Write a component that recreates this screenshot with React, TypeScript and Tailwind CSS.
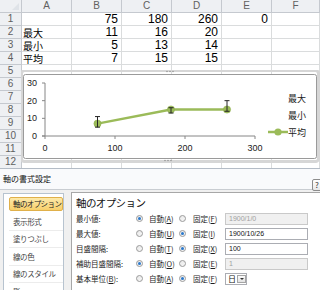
import React from "react";

const cols = ["A", "B", "C", "D", "E", "F"];
const data: string[][] = [
  ["", "75", "180", "260", "0", ""],
  ["最大", "11", "16", "20", "", ""],
  ["最小", "5", "13", "14", "", ""],
  ["平均", "7", "15", "15", "", ""],
];

function Sheet() {
  const rows = Array.from({ length: 12 }, (_, i) => i + 1);
  return (
    <div className="grid grid-cols-[22px_50px_50px_50px_50px_50px_48px] auto-rows-[13px]">
      <div className="relative bg-[#eef0f3] border-r border-b border-[#c5c9cf]">
        <div className="absolute right-[2px] bottom-[2px] w-0 h-0 border-l-[7px] border-l-transparent border-b-[7px] border-b-[#dfe3e8]" />
      </div>
      {cols.map((c) => (
        <div
          key={c}
          className="bg-[#eef0f3] border-r border-b border-[#c5c9cf] flex items-center justify-center text-[10px] leading-none text-[#606060] font-['Liberation_Sans_Narrow','Liberation_Sans',sans-serif]"
        >
          {c}
        </div>
      ))}
      {rows.map((r) => {
        const row = data[r - 1] || ["", "", "", "", "", ""];
        return (
          <React.Fragment key={r}>
            <div className="bg-[#eef0f3] border-r border-b border-[#c5c9cf] flex items-center justify-center text-[10px] leading-none text-[#606060] font-['Liberation_Sans_Narrow','Liberation_Sans',sans-serif]">
              {r}
            </div>
            {row.map((v, i) => {
              const isNum = /^[0-9]+$/.test(v);
              return (
                <div
                  key={i}
                  className={
                    isNum
                      ? "border-r border-b border-[#dadcdd] flex items-center justify-end pr-[3px] text-[12px] leading-none text-black font-['Liberation_Sans_Narrow','Liberation_Sans',sans-serif]"
                      : "border-r border-b border-[#dadcdd] flex items-center justify-start pl-[1px] text-[10px] leading-[11px] text-black font-['Noto_Sans_CJK_JP',sans-serif]"
                  }
                >
                  {v}
                </div>
              );
            })}
          </React.Fragment>
        );
      })}
    </div>
  );
}

function Chart() {
  const g = "#9bbb59";
  const ax = "#868686";
  const x = (v: number) => 45 + 0.7 * v;
  const y = (v: number) => 136 - (53 / 30) * v;
  const pts = [
    { v: 75, avg: 7, min: 5, max: 11 },
    { v: 180, avg: 15, min: 13, max: 16 },
    { v: 260, avg: 15, min: 14, max: 20 },
  ];
  return (
    <div className="absolute left-[21px] top-[70px] w-[299px] h-[93px]">
      <svg width="299" height="93" viewBox="21 70 299 93" className="block">
        <rect x="21.5" y="70.5" width="297" height="91" rx="3" fill="none" stroke="#d6d6d6" strokeWidth="3" />
        <rect x="23.5" y="74.5" width="293" height="84" rx="2" fill="#ffffff" stroke="#9a9a9a" strokeWidth="1" />
        {[0, 1, 2].map((i) => (
          <circle key={"t" + i} cx={167 + i * 3} cy={71.5} r={0.7} fill="#8a8a8a" />
        ))}
        {[0, 1, 2].map((i) => (
          <circle key={"b" + i} cx={165 + i * 3} cy={160.5} r={0.7} fill="#8a8a8a" />
        ))}
        <line x1="45" y1="83" x2="45" y2="136" stroke={ax} strokeWidth="1" />
        {[0, 10, 20, 30].map((v) => (
          <g key={v}>
            <line x1="42" y1={y(v)} x2="45" y2={y(v)} stroke={ax} strokeWidth="1" />
            <text
              x="37"
              y={y(v) + 3}
              textAnchor="end"
              fontSize="9"
              fill="#222"
              fontFamily="'Liberation Sans', sans-serif"
            >
              {v}
            </text>
          </g>
        ))}
        <line x1="42" y1="136" x2="255" y2="136" stroke={ax} strokeWidth="1" />
        {[0, 100, 200, 300].map((v) => (
          <g key={v}>
            <line x1={x(v)} y1="136" x2={x(v)} y2="139" stroke={ax} strokeWidth="1" />
            <text
              x={x(v)}
              y="151"
              textAnchor="middle"
              fontSize="9"
              fill="#222"
              fontFamily="'Liberation Sans', sans-serif"
            >
              {v}
            </text>
          </g>
        ))}
        <polyline
          points={pts.map((p) => `${x(p.v)},${y(p.avg)}`).join(" ")}
          fill="none"
          stroke={g}
          strokeWidth="2.5"
          strokeLinejoin="round"
        />
        {pts.map((p, i) => (
          <circle key={"m" + i} cx={x(p.v)} cy={y(p.avg)} r="3.6" fill={g} stroke="#8fb04d" strokeWidth="0.6" />
        ))}
        {pts.map((p, i) => (
          <g key={"e" + i} stroke="#262626" strokeWidth="1">
            <line x1={x(p.v)} y1={y(p.max)} x2={x(p.v)} y2={y(p.min)} />
            <line x1={x(p.v) - 2.5} y1={y(p.max)} x2={x(p.v) + 2.5} y2={y(p.max)} />
            <line x1={x(p.v) - 2.5} y1={y(p.min)} x2={x(p.v) + 2.5} y2={y(p.min)} />
          </g>
        ))}
        {[
          { t: "最大", yy: 98 },
          { t: "最小", yy: 115 },
          { t: "平均", yy: 132 },
        ].map((l) => (
          <text
            key={l.t}
            x="288"
            y={l.yy + 3.5}
            fontSize="9"
            fill="#222"
            fontFamily="'Noto Sans CJK JP', sans-serif"
          >
            {l.t}
          </text>
        ))}
        <line x1="268" y1="132" x2="288" y2="132" stroke={g} strokeWidth="2.5" />
        <circle cx="278" cy="132" r="3.6" fill={g} />
      </svg>
    </div>
  );
}

function Radio({ on }: { on: boolean }) {
  return (
    <div className="w-[7px] h-[7px] rounded-full border border-[#9a9a9a] bg-gradient-to-br from-[#e8e8e8] to-[#f8f8f8] flex items-center justify-center shrink-0">
      {on && <div className="w-[3px] h-[3px] rounded-full bg-[#2a78cc]" />}
    </div>
  );
}

function U({ c }: { c: string }) {
  return <span className="underline underline-offset-[1px]">{c}</span>;
}

type RowDef = {
  label: React.ReactNode;
  a: string;
  f: string;
  autoOn: boolean;
  value: string;
  kind: "input" | "select";
  disabled?: boolean;
};

function OptRow({ r }: { r: RowDef }) {
  return (
    <div className="h-[15px] flex items-center">
      <div className="w-[60px] shrink-0 text-[7.5px] leading-none text-[#1e1e1e] whitespace-nowrap">{r.label}</div>
      <Radio on={r.autoOn} />
      <div className="w-[36px] pl-[6px] shrink-0 text-[7.5px] leading-none text-[#1e1e1e] whitespace-nowrap">
        自動(<U c={r.a} />)
      </div>
      <Radio on={!r.autoOn} />
      <div className="w-[39px] pl-[7px] shrink-0 text-[7.5px] leading-none text-[#1e1e1e] whitespace-nowrap">
        固定(<U c={r.f} />)
      </div>
      {r.kind === "input" ? (
        <div
          className={
            r.disabled
              ? "w-[83px] h-[12px] border border-[#c9c9c9] bg-[#f0f0f0] flex items-center pl-[3px] text-[7px] text-[#a0a0a0] leading-none font-['Liberation_Sans',sans-serif]"
              : "w-[83px] h-[12px] border border-[#abadb3] bg-white flex items-center pl-[3px] text-[7px] text-[#111] leading-none font-['Liberation_Sans',sans-serif]"
          }
        >
          {r.value}
        </div>
      ) : (
        <div className="w-[22px] h-[12px] border border-[#abadb3] bg-white flex items-center pl-[2px] gap-[1px]">
          <span className="text-[8px] leading-none text-[#111] w-[8px]">{r.value}</span>
          <div className="w-[9px] h-[8px] border border-[#a5a5a5] bg-gradient-to-b from-[#fbfbfb] to-[#e2e2e2] flex items-center justify-center">
            <div className="w-0 h-0 border-l-[2px] border-r-[2px] border-t-[2px] border-l-transparent border-r-transparent border-t-[#333]" />
          </div>
        </div>
      )}
    </div>
  );
}

function Dialog() {
  const items = ["軸のオプション", "表示形式", "塗りつぶし", "線の色", "線のスタイル", "影"];
  const rows: RowDef[] = [
    { label: "最小値:", a: "A", f: "F", autoOn: true, value: "1900/1/0", kind: "input", disabled: true },
    { label: "最大値:", a: "U", f: "I", autoOn: false, value: "1900/10/26", kind: "input" },
    { label: "目盛間隔:", a: "T", f: "X", autoOn: false, value: "100", kind: "input" },
    { label: "補助目盛間隔:", a: "O", f: "E", autoOn: true, value: "1", kind: "input", disabled: true },
    {
      label: (
        <>
          基本単位(<U c="B" />):
        </>
      ),
      a: "A",
      f: "F",
      autoOn: false,
      value: "日",
      kind: "select",
    },
  ];
  return (
    <div className="absolute left-0 top-[168px] w-[320px] h-[140px] bg-[#f0f0f0] border-t border-[#b4bcc6] font-['Noto_Sans_CJK_JP',sans-serif]">
      <div className="relative h-[21px] bg-[#f9fafc] border-b border-[#c9cdd2] flex items-center pl-[3px] text-[8px] leading-none text-[#111]">
        軸の書式設定
        <div className="absolute left-[312px] top-[10px] w-[14px] h-[12px] rounded-[2px] border border-[#8c8c8c] bg-gradient-to-b from-white to-[#e8e8e8] flex items-center pl-[2px] text-[8px] leading-none text-[#333]">
          ?
        </div>
      </div>
      <div className="flex pt-[2px]">
        <div className="ml-[3px] mt-[1px] w-[61px] h-[110px] bg-white border-l border-t border-r border-[#b7c3cf] pl-[5px] pt-[2px] flex flex-col">
          {items.map((t, i) =>
            i === 0 ? (
              <div
                key={t}
                className="h-[14px] shrink-0 mt-[1px] mb-[2px] rounded-[2px] border border-[#e0b04a] bg-gradient-to-b from-[#fde9a8] to-[#f8cf6a] flex items-center pl-[3px] text-[7.5px] leading-none tracking-[-0.6px] text-[#222] whitespace-nowrap"
              >
                {t}
              </div>
            ) : (
              <div
                key={t}
                className="h-[17.5px] shrink-0 border-b border-[#ececec] flex items-center pl-[4px] text-[7.5px] leading-none tracking-[-0.4px] text-[#444] whitespace-nowrap"
              >
                {t}
              </div>
            )
          )}
        </div>
        <div className="ml-[7px] flex-1 h-[110px] bg-white border-l border-t border-[#a7a7a7] pl-[4px] pt-[2px]">
          <div className="h-[16px] flex items-center text-[10.5px] leading-none tracking-[-0.6px] text-[#111]">
            軸のオプション
          </div>
          {rows.map((r, i) => (
            <OptRow key={i} r={r} />
          ))}
          <div className="h-[15px] flex items-center gap-[5px]">
            <div className="w-[7px] h-[7px] border border-[#8e8f8f] bg-white" />
            <span className="text-[7.5px] leading-none text-[#1e1e1e]">日付軸の種類</span>
          </div>
        </div>
      </div>
    </div>
  );
}

export default function App() {
  return (
    <div className="relative w-[320px] h-[290px] overflow-hidden bg-white font-['Noto_Sans_CJK_JP',sans-serif]">
      <Sheet />
      <Chart />
      <Dialog />
    </div>
  );
}
